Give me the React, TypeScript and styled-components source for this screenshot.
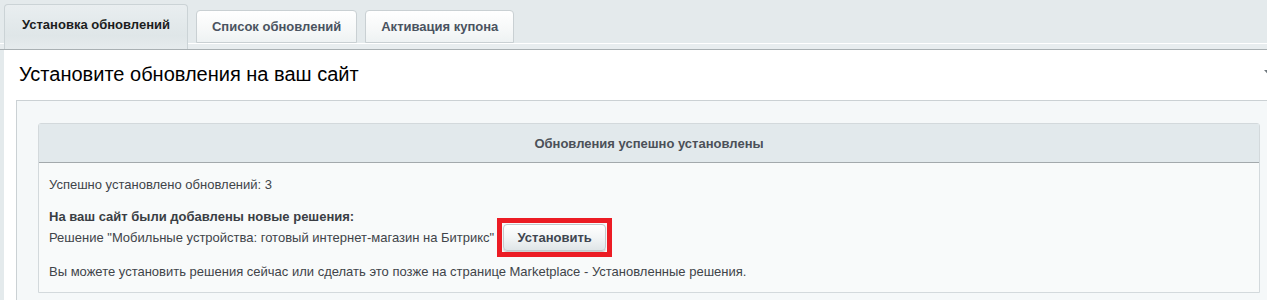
import React from "react";
import styled, { createGlobalStyle } from "styled-components";

const Global = createGlobalStyle`
  html, body {
    margin: 0;
    padding: 0;
    overflow: hidden;
    background: #e4eaec;
  }
  body {
    font-family: "Liberation Sans", Arial, sans-serif;
  }
`;

const Page = styled.div`
  width: 1281px;
  background: #e4eaec;
  padding-top: 4px;
`;

const TabStrip = styled.div`
  display: flex;
  align-items: flex-end;
  gap: 8px;
  padding-left: 4px;
  height: 45px;
  background: linear-gradient(
    to bottom,
    transparent 0,
    transparent 39px,
    #ffffff 39px,
    #ffffff 40px,
    #e8edef 40px
  );
  border-bottom: 1px solid #a9b0b3;
`;

const Tab = styled.div<{ $active?: boolean }>`
  box-sizing: border-box;
  display: flex;
  align-items: center;
  height: ${(p) => (p.$active ? "45px" : "33px")};
  margin-bottom: ${(p) => (p.$active ? "0" : "6px")};
  padding: ${(p) => (p.$active ? "0 17px 5px 17px" : "0 15px 0 15px")};
  border: 1px solid ${(p) => (p.$active ? "#cbd3d6" : "#c9d0d3")};
  border-bottom: ${(p) => (p.$active ? "none" : "1px solid #c9d0d3")};
  border-radius: 4px 4px 0 0;
  background: ${(p) =>
    p.$active
      ? "linear-gradient(to bottom, #e9eef0 0%, #dfe6e8 70%, #e6ebed 100%)"
      : "linear-gradient(to bottom, #ffffff 0%, #f6f8f8 60%, #eef2f3 100%)"};
  font-size: 13px;
  font-weight: bold;
  color: ${(p) => (p.$active ? "#1b1d20" : "#4a5360")};
  white-space: nowrap;
`;

const Panel = styled.div`
  margin-left: 4px;
  padding-left: 12px;
  background: #ffffff;
`;

const TitleBar = styled.div`
  display: flex;
  align-items: center;
  justify-content: space-between;
  height: 50px;
  padding: 0 8px 0 3px;
  border-bottom: 1px solid #cbd1d4;
`;

const Title = styled.h1`
  margin: 0;
  font-size: 20px;
  font-weight: normal;
  color: #000;
  padding-bottom: 2px;
`;

const CollapseArrow = styled.svg`
  width: 9px;
  height: 5px;
  margin-bottom: 5px;
  flex: none;
`;

const Content = styled.div`
  border-left: 1px solid #cbd1d4;
  background: #f5f8f9;
  padding: 22px 21px 7px 21px;
`;

const Box = styled.div`
  border: 1px solid #d3d9dc;
  border-radius: 3px 3px 0 0;
  background: #f8fafa;
`;

const BoxHeader = styled.div`
  height: 38px;
  display: flex;
  align-items: center;
  justify-content: center;
  background: #e2e9ec;
  border-bottom: 1px solid #a3a9ac;
  font-size: 13px;
  font-weight: bold;
  color: #4b5058;
`;

const BoxBody = styled.div`
  padding: 14px 10px 12px 10px;
  font-size: 13px;
  color: #404449;
`;

const Line = styled.div<{ $gap?: number; $bold?: boolean }>`
  line-height: 16px;
  margin-top: ${(p) => p.$gap ?? 0}px;
  font-weight: ${(p) => (p.$bold ? "bold" : "normal")};
  color: ${(p) => (p.$bold ? "#3a3e44" : "inherit")};
`;

const SolutionRow = styled.div`
  display: flex;
  align-items: center;
  gap: 3px;
  height: 27px;
  margin-top: -1px;
`;

const Highlight = styled.span`
  display: inline-flex;
  border: 5px solid #ec1c24;
  padding: 1px;
  margin: -6px 0;
`;

const InstallButton = styled.button`
  box-sizing: border-box;
  height: 27px;
  width: 103px;
  border: 1px solid #c3cacd;
  border-radius: 4px;
  background: linear-gradient(to bottom, #ffffff 0%, #f2f5f6 50%, #dfe5e7 100%);
  box-shadow: 0 1px 1px rgba(0, 0, 0, 0.18);
  font-family: "Liberation Sans", Arial, sans-serif;
  font-size: 13px;
  font-weight: bold;
  color: #3f4650;
  padding: 0;
  cursor: pointer;
`;

export default function App() {
  return (
    <>
      <Global />
      <Page>
        <TabStrip>
          <Tab $active>Установка обновлений</Tab>
          <Tab>Список обновлений</Tab>
          <Tab>Активация купона</Tab>
        </TabStrip>
        <Panel>
          <TitleBar>
            <Title>Установите обновления на ваш сайт</Title>
            <CollapseArrow viewBox="0 0 9 5">
              <path d="M0 0 H9 L4.5 5 Z" fill="#6f787e" />
            </CollapseArrow>
          </TitleBar>
          <Content>
            <Box>
              <BoxHeader>Обновления успешно установлены</BoxHeader>
              <BoxBody>
                <Line>Успешно установлено обновлений: 3</Line>
                <Line $gap={16} $bold>
                  На ваш сайт были добавлены новые решения:
                </Line>
                <SolutionRow>
                  <span>
                    Решение "Мобильные устройства: готовый интернет-магазин на Битрикс"
                  </span>
                  <Highlight>
                    <InstallButton>Установить</InstallButton>
                  </Highlight>
                </SolutionRow>
                <Line $gap={13}>
                  Вы можете установить решения сейчас или сделать это позже на странице
                  Marketplace - Установленные решения.
                </Line>
              </BoxBody>
            </Box>
          </Content>
        </Panel>
      </Page>
    </>
  );
}
